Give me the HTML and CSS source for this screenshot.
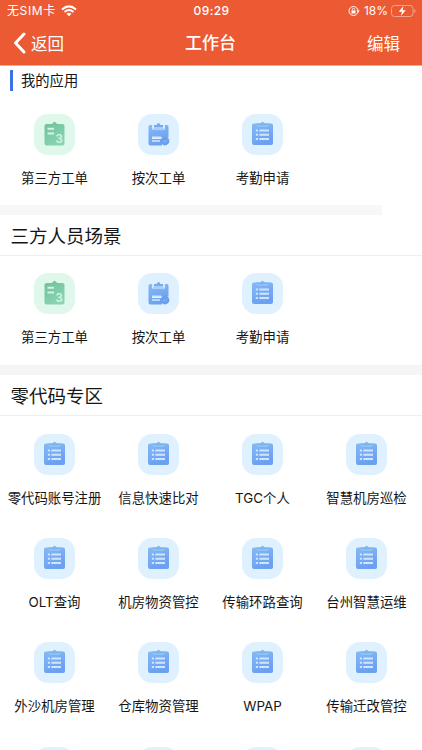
FILE: index.html
```html
<!DOCTYPE html>
<html lang="zh-CN">
<head>
	<meta charset="utf-8" />
	<title>工作台</title>
	<link rel="stylesheet" href="styles.css">
</head>

<body>
	<!-- shared icons -->
	<svg class="defs" width="0" height="0">
		<linearGradient id="blue" x1="0" y1="0" x2="0.4" y2="1">
			<stop offset="0" stop-color="#86b9f4" />
			<stop offset="1" stop-color="#6ba0f2" />
		</linearGradient>
		<linearGradient id="green" x1="0" y1="0" x2="0.6" y2="1">
			<stop offset="0" stop-color="#70c39b" />
			<stop offset="1" stop-color="#8bd4b1" />
		</linearGradient>
		<symbol id="list" viewBox="0 0 41 41">
			<rect x="10" y="9.500" width="21" height="21.500" rx="2" fill="url(#blue)" />
			<path d="M13.500 9.500H18Q20.500 6.500 23 9.500H27.500L26 12.500H15Z" fill="#7bb3ee" />
			<path d="M14 10.500L15.500 12H25.500L27 10.500" fill="none" stroke="#a0cdf8" stroke-width="1" />
			<path d="M13.800 16.500h2.200M13.800 20.700h2.200M13.800 25h2.200M17.300 16.500h9.700M17.300 20.700h9.700M17.300 25h9.700" stroke="#cfe6fd" stroke-width="1.900" />
		</symbol>
		<symbol id="order" viewBox="0 0 41 41">
			<path d="M12 11H14.500V14.500H26.500V11H29Q30.500 11 30.500 12.500V23.500H14V25H24V31.500H12.500Q10.500 31.500 10.500 29.500V12.500Q10.500 11 12 11Z" fill="url(#blue)" />
			<path d="M14.500 14h12v3h-12Z" fill="#82b4f3" />
			<path d="M14.500 11v4h12v-4" fill="none" stroke="#d2e8fd" stroke-width="1.200" />
			<path d="M16 13.500V11H18.500Q20.500 7 22.500 11H25V13.500Z" fill="#77a9ee" />
			<path d="M14 23.200h9M14 27h8" stroke="#d2e8fd" stroke-width="1.500" />
			<circle cx="27" cy="27" r="4.400" fill="#6b9fec" />
			<path d="M25 27l1.300 .8 2.500-1.300" fill="none" stroke="#93bdf5" stroke-width=".9" />
		</symbol>
		<symbol id="third" viewBox="0 0 41 41">
			<rect x="10.500" y="10" width="20" height="21.500" rx="2" fill="url(#green)" />
			<path d="M17 10.500L19 9Q20.500 6.500 22 9L24 10.500Z" fill="#74c49d" />
			<path d="M13.500 14.800h6.500M13.500 19.500h6.500" stroke="#d5f4e5" stroke-width="1.900" />
		</symbol>
	</svg>

	<header class="header">
		<div class="status">
			<div class="carrier">
				<span>无SIM卡</span>
				<svg class="wifi" width="16" height="12" viewBox="0 0 16 12">
					<path d="M1 4.500Q8-1.700 15 4.500M3.500 7Q8 3 12.500 7" fill="none" stroke="#fff" stroke-width="2" />
					<path d="M5.500 8.700Q8 6.700 10.500 8.700L8 11.300Z" fill="#fff" />
				</svg>
			</div>
			<span class="clock">09:29</span>
			<div class="power">
				<svg class="lock" width="12" height="12" viewBox="0 0 12 12">
					<circle cx="5.500" cy="6" r="4.500" fill="none" stroke="#fff" stroke-width="1" />
					<path d="M8.500 5.500h3.300L10.200 7.600Z" fill="#fff" />
					<rect x="3.500" y="5.500" width="4" height="3" fill="#fff" />
					<path d="M4.300 5.500V4.500a1.200 1.200 0 0 1 2.400 0V5.500" fill="none" stroke="#fff" stroke-width=".8" />
				</svg>
				<span>18%</span>
				<svg class="battery" width="25" height="12" viewBox="0 0 25 12">
					<rect x=".5" y=".5" width="21.500" height="11" rx="3" fill="none" stroke="#f4a38c" />
					<path d="M23.200 4v4q1.300-.7 1.300-2t-1.300-2" fill="#f4a38c" />
					<path d="M12.500 1L7.700 6.700H11L9.800 11L14.800 5.200H11.500Z" fill="#fff" />
				</svg>
			</div>
		</div>
		<nav class="nav">
			<div class="back">
				<svg width="13" height="22" viewBox="0 0 13 22">
					<path d="M11 2L2.500 11L11 20" fill="none" stroke="#fff" stroke-width="3" stroke-linecap="round" stroke-linejoin="round" />
				</svg>
				<span>返回</span>
			</div>
			<h1 class="title">工作台</h1>
			<span class="edit">编辑</span>
		</nav>
	</header>

	<section class="mine">
		<h2 class="mine-title">我的应用</h2>
		<div class="apps">
			<div class="app"><svg class="icon green"><use href="#third" /><text x="21.500" y="28.500" class="digit">3</text></svg><span>第三方工单</span></div>
			<div class="app"><svg class="icon"><use href="#order" /></svg><span>按次工单</span></div>
			<div class="app"><svg class="icon"><use href="#list" /></svg><span>考勤申请</span></div>
		</div>
	</section>
	<div class="gap short"></div>

	<section>
		<h2 class="section-title">三方人员场景</h2>
		<div class="apps">
			<div class="app"><svg class="icon green"><use href="#third" /><text x="21.500" y="28.500" class="digit">3</text></svg><span>第三方工单</span></div>
			<div class="app"><svg class="icon"><use href="#order" /></svg><span>按次工单</span></div>
			<div class="app"><svg class="icon"><use href="#list" /></svg><span>考勤申请</span></div>
		</div>
	</section>
	<div class="gap"></div>

	<section class="zone">
		<h2 class="section-title">零代码专区</h2>
		<div class="apps">
			<div class="app"><svg class="icon"><use href="#list" /></svg><span>零代码账号注册</span></div>
			<div class="app"><svg class="icon"><use href="#list" /></svg><span>信息快速比对</span></div>
			<div class="app"><svg class="icon"><use href="#list" /></svg><span>TGC个人</span></div>
			<div class="app"><svg class="icon"><use href="#list" /></svg><span>智慧机房巡检</span></div>
			<div class="app"><svg class="icon"><use href="#list" /></svg><span>OLT查询</span></div>
			<div class="app"><svg class="icon"><use href="#list" /></svg><span>机房物资管控</span></div>
			<div class="app"><svg class="icon"><use href="#list" /></svg><span>传输环路查询</span></div>
			<div class="app"><svg class="icon"><use href="#list" /></svg><span>台州智慧运维</span></div>
			<div class="app"><svg class="icon"><use href="#list" /></svg><span>外沙机房管理</span></div>
			<div class="app"><svg class="icon"><use href="#list" /></svg><span>仓库物资管理</span></div>
			<div class="app"><svg class="icon"><use href="#list" /></svg><span>WPAP</span></div>
			<div class="app"><svg class="icon"><use href="#list" /></svg><span>传输迁改管控</span></div>
			<div class="app"><svg class="icon"></svg></div>
			<div class="app"><svg class="icon"></svg></div>
			<div class="app"><svg class="icon"></svg></div>
			<div class="app"><svg class="icon"></svg></div>
		</div>
	</section>
</body>
</html>
```

FILE: styles.css
```css
* {
	box-sizing: border-box;
}
body {
	display: flex;
	flex-direction: column;
	margin: 0;
	height: 750px;
	background: #fff;
	color: #161616;
	font-family: Inter, "Noto Sans CJK SC", sans-serif;
}
h1, h2 {
	margin: 0;
	font-weight: 400;
}
svg {
	display: block;
}
.defs {
	position: absolute;
}
.header {
	flex: none;
	height: 66px;
	background: #eb5a33;
	border-bottom: 1px solid #f3ab96;
	color: #fff;
}
.status {
	display: grid;
	grid-template-columns: 1fr auto 1fr;
	align-items: center;
	height: 21px;
	padding: 0 6px 0 7px;
	font-size: 12px;
	line-height: 21px;
}
.carrier, .power {
	display: flex;
	align-items: center;
}
.carrier {
	gap: 5px;
	letter-spacing: .6px;
}
.clock {
	font-weight: 500;
	letter-spacing: .4px;
}
.power {
	justify-content: flex-end;
}
.lock {
	margin-right: 4px;
}
.battery {
	margin-left: 3px;
}
.nav {
	display: grid;
	grid-template-columns: 1fr auto 1fr;
	align-items: center;
	height: 44px;
	padding: 0 22px 0 13px;
	font-size: 16.5px;
}
.back {
	display: flex;
	align-items: center;
	gap: 5px;
}
.title {
	padding-left: 8px;
	font-size: 17px;
	font-weight: 500;
	line-height: 24px;
}
.edit {
	text-align: right;
}
.mine {
	flex: none;
	height: 139px;
	padding-top: 4px;
}
.mine-title {
	height: 21px;
	margin-left: 10px;
	padding-left: 8px;
	border-left: 3px solid #3c70e4;
	font-size: 14.3px;
	line-height: 21px;
}
.gap {
	flex: none;
	height: 10px;
	background: #f5f5f6;
}
.gap.short {
	width: 382px;
	background: #f7f7fa;
}
.section-title {
	height: 41px;
	padding-left: 10.5px;
	border-bottom: 1px solid #eee;
	font-size: 18.5px;
	line-height: 42px;
}
.apps {
	display: grid;
	grid-template-columns: repeat(4, 104px);
	grid-auto-rows: 104.3px;
	padding: 0 2.5px;
}
.app {
	display: flex;
	flex-direction: column;
	align-items: center;
	padding-top: 17.4px;
	font-size: 13.4px;
	line-height: 20px;
	white-space: nowrap;
}
.icon {
	flex: none;
	width: 41px;
	height: 41px;
	margin-bottom: 13px;
	border-radius: 14px;
	background: #dff1ff;
}
.icon.green {
	background: #e0f7ec;
}
.mine .app {
	padding-top: 22.5px;
}
.section-title + .apps {
	min-height: 109.4px;
}
/* last section is cut by the bottom of the screen */
.zone {
	flex: 1;
	min-height: 0;
	overflow: hidden;
}
.digit {
	fill: #d5f4e5;
	font-size: 11.5px;
	font-weight: 600;
}
```
